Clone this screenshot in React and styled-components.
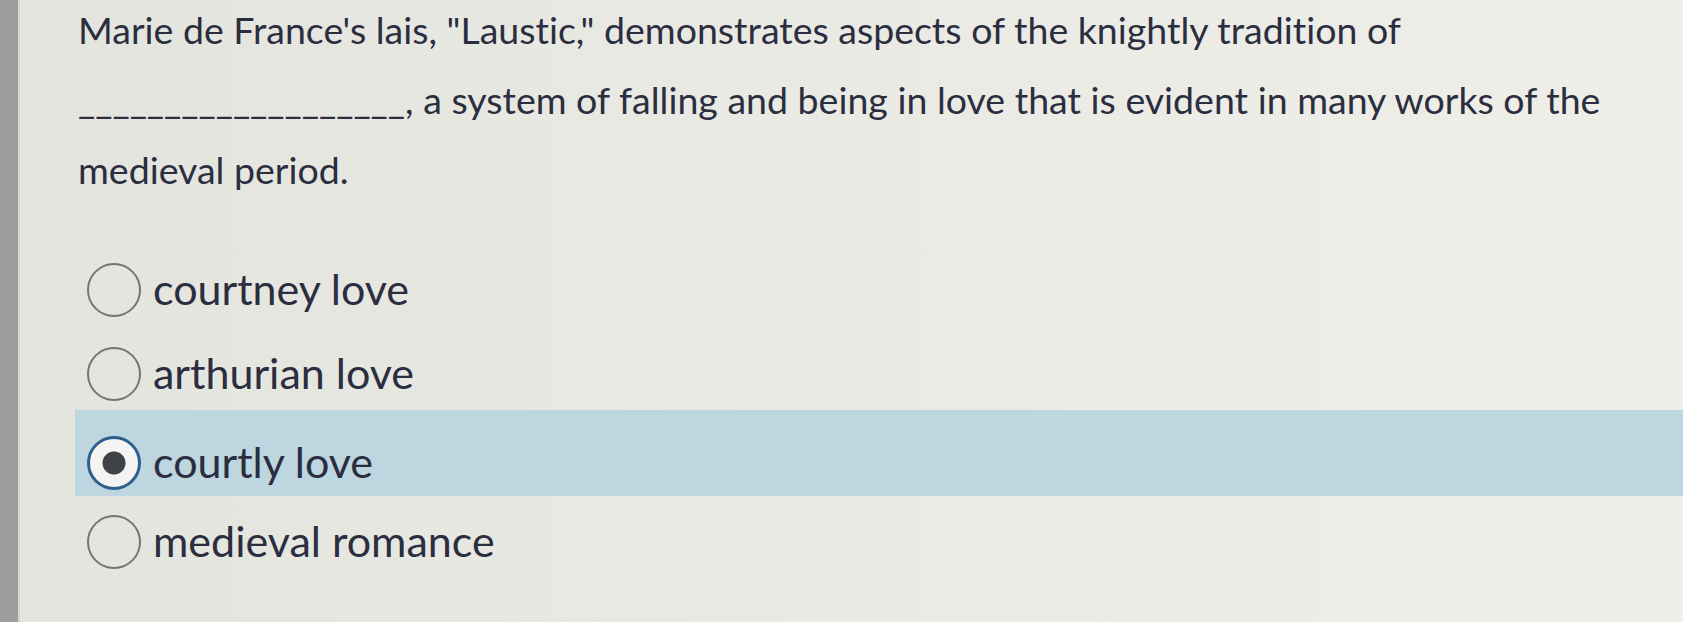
import React from "react";
import styled, { createGlobalStyle } from "styled-components";

const GlobalStyle = createGlobalStyle`
  body {
    margin: 0;
    background: #e8e8e3;
    font-family: Lato, "Open Sans", sans-serif;
    font-variant-ligatures: no-common-ligatures;
  }
`;

const options = [
  { id: "a", label: "courtney love" },
  { id: "b", label: "arthurian love" },
  { id: "c", label: "courtly love" },
  { id: "d", label: "medieval romance" },
];

const App = () => {
  const selected = "c";

  return (
    <Page>
      <GlobalStyle />
      <Bezel />
      <Content>
        <Question>
          Marie de France's lais, "Laustic," demonstrates aspects of the knightly tradition of
          <br />
          <span>___________________</span>, a system of falling and being in love that is evident in many works of the
          <br />
          medieval period.
        </Question>

        <Answers>
          {options.map((opt) => (
            <Answer key={opt.id} $active={opt.id === selected}>
              <Radio $checked={opt.id === selected} />
              <Label>{opt.label}</Label>
            </Answer>
          ))}
        </Answers>
      </Content>
    </Page>
  );
};

const Page = styled.div`
  display: flex;
  width: 1683px;
  height: 622px;
  overflow: hidden;
  background: linear-gradient(90deg, #e4e4df 0%, #e9e9e4 40%, #efeee8 100%);
`;

const Bezel = styled.div`
  width: 18px;
  flex-shrink: 0;
  background: #9c9e9c;
  border-right: 2px solid #d6d6d1;
`;

const Content = styled.div`
  flex: 1;
  padding-left: 58px;
`;

const Question = styled.p`
  margin: -5px 0 0 0;
  font-size: 37.5px;
  line-height: 70px;
  color: #2b2e3e;
  white-space: nowrap;
`;

const Answers = styled.div`
  display: flex;
  flex-direction: column;
  margin-top: 43px;
  margin-left: -3px;
`;

// the selected row's highlight sits a little higher than its radio
const Answer = styled.label`
  display: flex;
  align-items: center;
  gap: 12px;
  height: ${(p) => (p.$active ? "86px" : "84px")};
  box-sizing: border-box;
  margin: ${(p) => (p.$active ? "-6px 0 4px" : "0")};
  padding-left: 12px;
  padding-top: ${(p) => (p.$active ? "20px" : "0")};
  background: ${(p) => (p.$active ? "#bdd6df" : "transparent")};
`;

const Radio = styled.span`
  width: 54px;
  height: 54px;
  box-sizing: border-box;
  border-radius: 50%;
  flex-shrink: 0;
  border: ${(p) => (p.$checked ? "3px solid #2c5e8e" : "2px solid #747474")};
  background: ${(p) =>
    p.$checked
      ? "radial-gradient(circle, #3f4348 0 11px, #f4f5f3 12px)"
      : "transparent"};
`;

const Label = styled.span`
  font-size: 43px;
  color: #2b2e3e;
  line-height: 1;
  padding-bottom: 4px;
`;

export default App;
